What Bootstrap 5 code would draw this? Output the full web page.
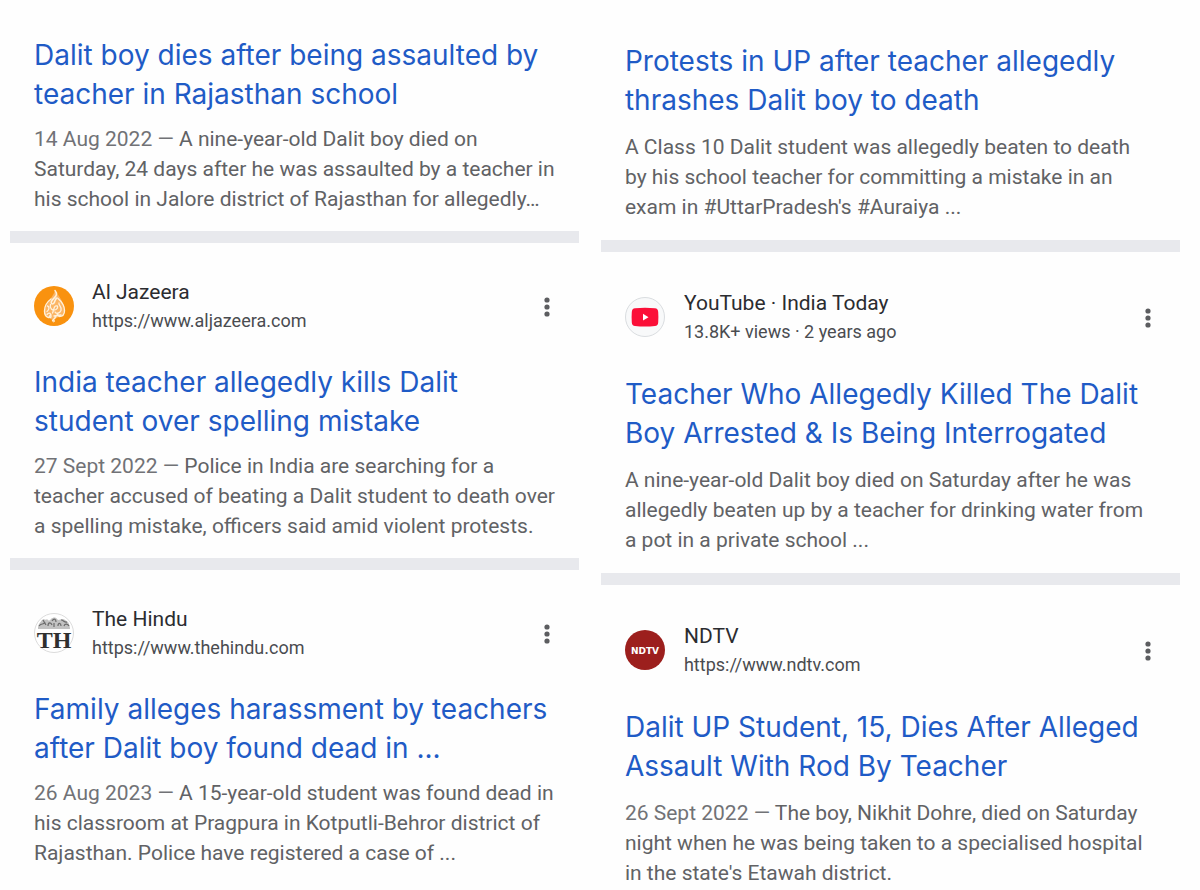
<!DOCTYPE html>
<html lang="en">
<head>
<meta charset="utf-8">
<meta name="viewport" content="width=device-width, initial-scale=1">
<title>Search results</title>
<link rel="stylesheet" href="https://cdn.jsdelivr.net/npm/bootstrap@5.3.0/dist/css/bootstrap.min.css">
<style>
  body { font-family: Roboto, "Liberation Sans", sans-serif; background: #fefefe; }
  .results-grid { display: grid; grid-template-columns: 142fr 145fr; column-gap: 22px; padding: 0 20px 0 10px; }
  .feed { --head-top: 35px; --head-gap: 18px; --head-bottom: 29px; --text-gap: 10px; --end-gap: 17px; padding-top: 36px; }
  .feed-wide { --head-top: 37px; --head-gap: 19px; --head-bottom: 30px; --text-gap: 12px; --end-gap: 18px; padding-top: 42px; }
  .result { padding: 0 24px var(--end-gap); border-bottom: 12px solid #e8e9ed; }
  .result:last-child { border-bottom: 0; padding-bottom: 0; }
  .source { gap: var(--head-gap); padding-top: var(--head-top); margin-bottom: var(--head-bottom); }
  .source-icon { width: 40px; height: 40px; overflow: visible; }
  .source-name { font-size: 21px; line-height: 29px; color: #2b2c30; }
  .source-url { font-size: 18px; line-height: 27px; color: #4a4c50; }
  .menu-btn { width: 16px; height: 32px; color: #5c5d60; }
  .title { font-family: Inter, Roboto, sans-serif; font-size: 28px; line-height: 39px; font-weight: 400; margin-bottom: var(--text-gap); }
  .title a { color: #1f5bc6; }
  .snippet { font-size: 21px; line-height: 30px; color: #616265; }
  .date { color: #717276; }
  @media (min-width: 1100px) { .title, .snippet { white-space: nowrap; } }
  @media (max-width: 800px) { .results-grid { grid-template-columns: 1fr; } }
</style>
</head>
<body>
<svg class="d-none" aria-hidden="true">
  <symbol id="dots" viewBox="0 0 16 32"><g fill="currentColor"><circle cx="8" cy="10" r="2.6"/><circle cx="8" cy="17" r="2.6"/><circle cx="8" cy="24" r="2.6"/></g></symbol>
</svg>
<main class="results-grid">
  <section class="feed">
    <article class="result">
      <h3 class="title"><a class="text-decoration-none" href="#">Dalit boy dies after being assaulted by<br>teacher in Rajasthan school</a></h3>
      <p class="snippet mb-0"><span class="date">14 Aug 2022 —</span> A nine-year-old Dalit boy died on<br>Saturday, 24 days after he was assaulted by a teacher in<br>his school in Jalore district of Rajasthan for allegedly…</p>
    </article>
    <article class="result">
      <div class="source d-flex align-items-center">
        <svg class="source-icon flex-shrink-0" viewBox="0 0 40 40" aria-hidden="true">
          <circle cx="20" cy="20" r="20" fill="#f9920f"/>
          <path fill="#fbb566" d="M21 5C25 10 31 17 30 25C29 31 23 30 19 35C17 31 10 32 10.500 25C11 19 17 14 21 5Z"/>
          <g fill="none" stroke="#fff1dc" stroke-linecap="round" stroke-linejoin="round">
            <path stroke-width="1.500" d="M21 4.500C25 9 20 11.500 18 14.500C16 17.500 18.500 19 20 17C21.500 15 20.500 13.500 23 12"/>
            <path stroke-width="1.400" d="M17 13C13 16 10.500 20 10.500 25C10.500 29 12.500 31 14.500 31.500"/>
            <path stroke-width="1.400" d="M24 12.500C28 16 30.500 20 30.500 24.500C30.500 28.500 28 30.500 25 30.500"/>
            <path stroke-width="1.300" d="M13.500 20C15.500 20.500 15.500 23.500 13 25.500M16.500 18.500C15.500 22 18 25.500 22 23.500C24.500 22 24 19 21.500 20C19.500 21 20 24 18.500 27M25 17C24 19 28.500 20.500 27 24.500C25.800 27.500 22 28 21 26M13 28.500C15 26 17.500 27.500 17 30.500C16.500 33 14.500 31 16 29.500M18.500 34.500C21.500 32.500 22 29 24 28M20 30L27 29"/>
            <circle cx="19.500" cy="35" r=".8"/>
          </g>
        </svg>
        <div class="flex-grow-1">
          <div class="source-name">Al Jazeera</div>
          <div class="source-url">https://www.aljazeera.com</div>
        </div>
        <button type="button" class="menu-btn btn p-0 border-0 d-flex" aria-label="More about Al Jazeera"><svg class="w-100 h-100"><use href="#dots"/></svg></button>
      </div>
      <h3 class="title"><a class="text-decoration-none" href="#">India teacher allegedly kills Dalit<br>student over spelling mistake</a></h3>
      <p class="snippet mb-0"><span class="date">27 Sept 2022 —</span> Police in India are searching for a<br>teacher accused of beating a Dalit student to death over<br>a spelling mistake, officers said amid violent protests.</p>
    </article>
    <article class="result">
      <div class="source d-flex align-items-center">
        <svg class="source-icon flex-shrink-0" viewBox="0 0 40 40" role="img" aria-label="The Hindu">
          <circle cx="20" cy="20" r="19.500" fill="#fff" stroke="#dcdcdc"/>
          <path fill="#c2c2c2" d="M4 16C4 11 6 10 8 7C10 5 12 8 13 6C15 8 15 8 17 6C19 4 22 4 23 6C25 8 26 6 28 6C31 6 32 8 34 9C35 11 36 13 36 16Z"/>
          <g fill="none" stroke="#6a6a6a" stroke-width="1.200"><path d="M5 13C8 9 9 13 11 9M9 7L12 12M14 13C14 9 17 9 18 12M18 8C20 5 22 6 22 9M20 10V14M24 13C24 9 27 10 27 13M27 7C30 7 30 10 33 9M30 13C31 10 34 11 35 13"/></g>
          <text x="20" y="35" text-anchor="middle" font-family="Liberation Serif, serif" font-weight="700" font-size="24" fill="#303030">TH</text>
        </svg>
        <div class="flex-grow-1">
          <div class="source-name">The Hindu</div>
          <div class="source-url">https://www.thehindu.com</div>
        </div>
        <button type="button" class="menu-btn btn p-0 border-0 d-flex" aria-label="More about The Hindu"><svg class="w-100 h-100"><use href="#dots"/></svg></button>
      </div>
      <h3 class="title"><a class="text-decoration-none" href="#">Family alleges harassment by teachers<br>after Dalit boy found dead in ...</a></h3>
      <p class="snippet mb-0"><span class="date">26 Aug 2023 —</span> A 15-year-old student was found dead in<br>his classroom at Pragpura in Kotputli-Behror district of<br>Rajasthan. Police have registered a case of ...</p>
    </article>
  </section>

  <section class="feed feed-wide">
    <article class="result">
      <h3 class="title"><a class="text-decoration-none" href="#">Protests in UP after teacher allegedly<br>thrashes Dalit boy to death</a></h3>
      <p class="snippet mb-0">A Class 10 Dalit student was allegedly beaten to death<br>by his school teacher for committing a mistake in an<br>exam in #UttarPradesh's #Auraiya ...</p>
    </article>
    <article class="result">
      <div class="source d-flex align-items-center">
        <svg class="source-icon flex-shrink-0" viewBox="0 0 40 40" aria-hidden="true">
          <circle cx="20" cy="20" r="19.500" fill="#f8f9fa" stroke="#dadde0"/>
          <path fill="#fb0f38" d="M10 11.300Q20 10 30 11.300Q33 11.600 33.200 15Q33.600 20 33.200 25.500Q33 28.700 30 29Q20 30 10 29Q7 28.700 6.800 25.500Q6.400 20 6.800 15Q7 11.600 10 11.300Z"/>
          <path fill="#fff" d="M18 16.800L23.500 20.200L18 23.600Z"/>
        </svg>
        <div class="flex-grow-1">
          <div class="source-name">YouTube · India Today</div>
          <div class="source-url">13.8K+ views · 2 years ago</div>
        </div>
        <button type="button" class="menu-btn btn p-0 border-0 d-flex" aria-label="More about YouTube"><svg class="w-100 h-100"><use href="#dots"/></svg></button>
      </div>
      <h3 class="title"><a class="text-decoration-none" href="#">Teacher Who Allegedly Killed The Dalit<br>Boy Arrested &amp; Is Being Interrogated</a></h3>
      <p class="snippet mb-0">A nine-year-old Dalit boy died on Saturday after he was<br>allegedly beaten up by a teacher for drinking water from<br>a pot in a private school ...</p>
    </article>
    <article class="result">
      <div class="source d-flex align-items-center">
        <svg class="source-icon flex-shrink-0" viewBox="0 0 40 40" role="img" aria-label="NDTV">
          <circle cx="20" cy="20" r="20" fill="#9c1f1d"/>
          <text x="20" y="24" text-anchor="middle" font-family="DejaVu Sans, sans-serif" font-weight="700" font-size="9" fill="#fff">NDTV</text>
        </svg>
        <div class="flex-grow-1">
          <div class="source-name">NDTV</div>
          <div class="source-url">https://www.ndtv.com</div>
        </div>
        <button type="button" class="menu-btn btn p-0 border-0 d-flex" aria-label="More about NDTV"><svg class="w-100 h-100"><use href="#dots"/></svg></button>
      </div>
      <h3 class="title"><a class="text-decoration-none" href="#">Dalit UP Student, 15, Dies After Alleged<br>Assault With Rod By Teacher</a></h3>
      <p class="snippet mb-0"><span class="date">26 Sept 2022 —</span> The boy, Nikhit Dohre, died on Saturday<br>night when he was being taken to a specialised hospital<br>in the state's Etawah district.</p>
    </article>
  </section>
</main>
<script src="https://cdn.jsdelivr.net/npm/bootstrap@5.3.0/dist/js/bootstrap.bundle.min.js"></script>
</body>
</html>
